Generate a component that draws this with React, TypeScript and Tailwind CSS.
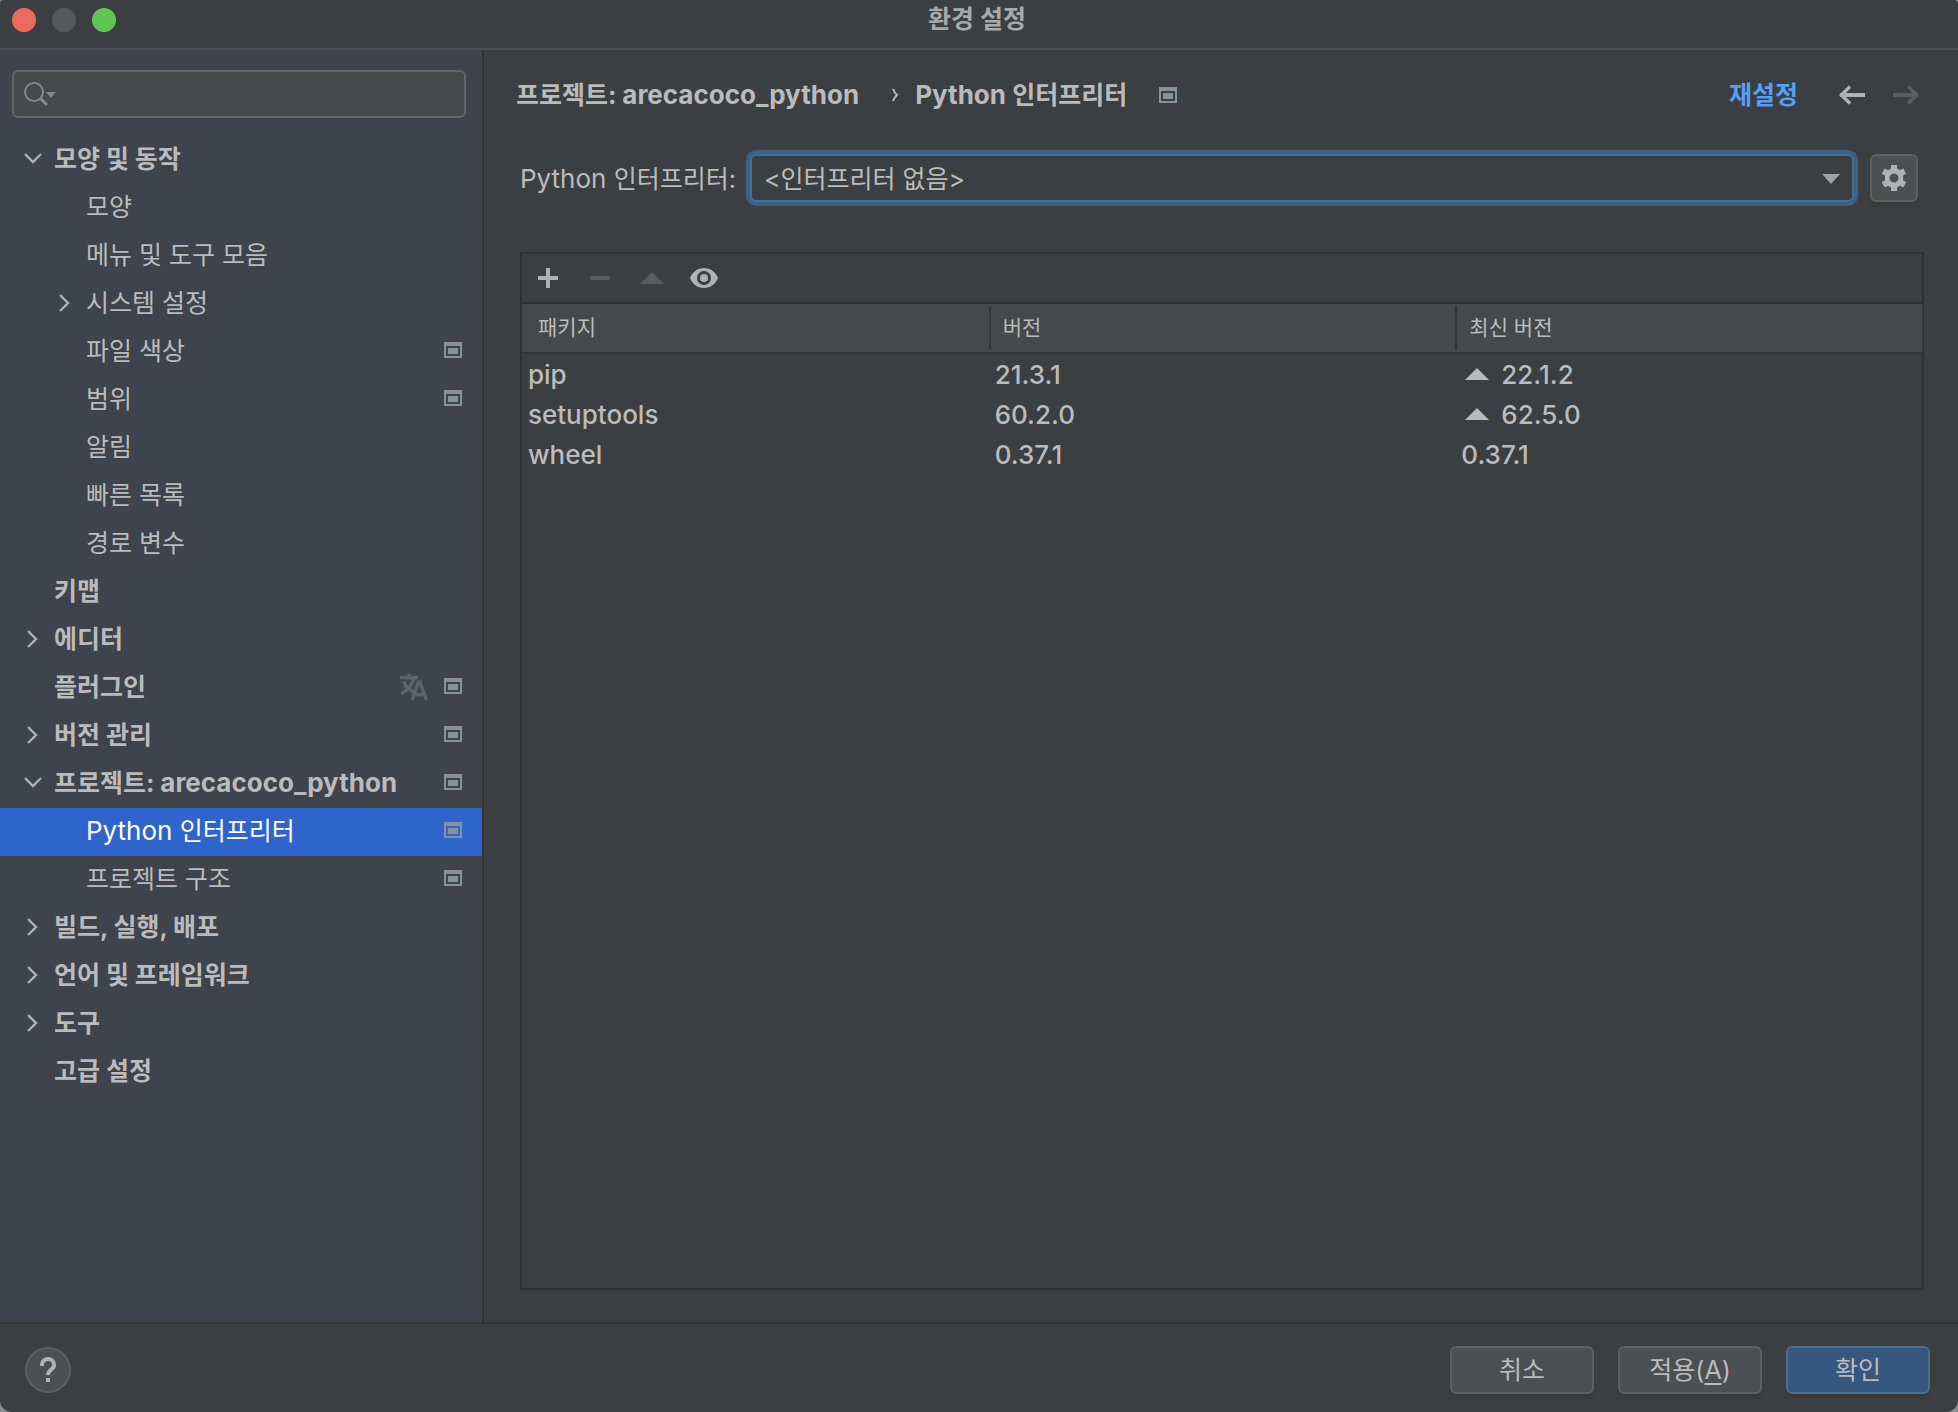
import { useState } from "react";

interface TreeItem {
  label: string;
  level: 0 | 1;
  state?: "open" | "closed";
  project?: boolean;
  translate?: boolean;
}

const treeItems: TreeItem[] = [
  { label: "모양 및 동작", level: 0, state: "open" },
  { label: "모양", level: 1 },
  { label: "메뉴 및 도구 모음", level: 1 },
  { label: "시스템 설정", level: 1, state: "closed" },
  { label: "파일 색상", level: 1, project: true },
  { label: "범위", level: 1, project: true },
  { label: "알림", level: 1 },
  { label: "빠른 목록", level: 1 },
  { label: "경로 변수", level: 1 },
  { label: "키맵", level: 0 },
  { label: "에디터", level: 0, state: "closed" },
  { label: "플러그인", level: 0, project: true, translate: true },
  { label: "버전 관리", level: 0, state: "closed", project: true },
  { label: "프로젝트: arecacoco_python", level: 0, state: "open", project: true },
  { label: "Python 인터프리터", level: 1, project: true },
  { label: "프로젝트 구조", level: 1, project: true },
  { label: "빌드, 실행, 배포", level: 0, state: "closed" },
  { label: "언어 및 프레임워크", level: 0, state: "closed" },
  { label: "도구", level: 0, state: "closed" },
  { label: "고급 설정", level: 0 },
];

const packages = [
  { name: "pip", version: "21.3.1", latest: "22.1.2", upgradable: true },
  { name: "setuptools", version: "60.2.0", latest: "62.5.0", upgradable: true },
  { name: "wheel", version: "0.37.1", latest: "0.37.1", upgradable: false },
];

// Latin runs are set one pixel larger than the Hangul around them
function Mixed({ text }: { text: string }) {
  return text.split(/([A-Za-z_]+ ?)/).map((part, i) =>
    i % 2 === 1 ? (
      <span key={i} className="text-[26px] leading-none">
        {part}
      </span>
    ) : (
      part
    ),
  );
}

function ProjectIcon() {
  return (
    <svg width="18" height="16" viewBox="0 0 18 16" className="shrink-0 text-[#87939a]">
      <path
        fill="currentColor"
        fillRule="evenodd"
        d="M0 0h18v16H0zM2 4v10h14V4zM4 6h10v6H4z"
      />
    </svg>
  );
}

function TranslateIcon() {
  return (
    <svg
      width="28"
      height="28"
      viewBox="0 0 28 28"
      fill="none"
      stroke="currentColor"
      strokeWidth="3.4"
      className="shrink-0 text-[#5b656d]"
    >
      <path d="M0 5.500h18M9 2v4M3.500 9.500C6 15 10 18 13.500 20M14 6c-1.500 7-6 12-13 15.500" />
      <path d="M12 28l6.500-18h1.500l6.500 18M14.500 22.500h9.500" />
    </svg>
  );
}

function Chevron({ state }: { state?: "open" | "closed" }) {
  return (
    <svg
      width="20"
      height="20"
      viewBox="0 0 20 20"
      fill="none"
      stroke="currentColor"
      strokeWidth="2.4"
      className="shrink-0 text-[#b0b2b4]"
    >
      {state === "open" && <path d="M2 5l8 8 8-8" />}
      {state === "closed" && <path d="M5 2l8 8-8 8" />}
    </svg>
  );
}

function Triangle({ className }: { className: string }) {
  return (
    <svg width="24" height="12" viewBox="0 0 24 12" className={className}>
      <path fill="currentColor" d="M0 12L12 0l12 12z" />
    </svg>
  );
}

function TitleBar() {
  return (
    <header className="relative flex h-[50px] shrink-0 items-start justify-center border-b-2 border-[#515151] pr-1">
      <div className="absolute top-2 left-3 flex gap-4">
        <button type="button" aria-label="닫기" className="size-6 rounded-full bg-[#ed6a5e]" />
        <button type="button" aria-label="최소화" className="size-6 rounded-full bg-[#565a5c]" />
        <button type="button" aria-label="확대" className="size-6 rounded-full bg-[#61c554]" />
      </div>
      <h1 className="leading-[38px] font-bold text-[#a7a9aa]">환경 설정</h1>
    </header>
  );
}

function Sidebar() {
  const [selected, setSelected] = useState("Python 인터프리터");

  return (
    <aside className="w-[484px] shrink-0 border-r-2 border-[#323232] bg-[#3f434c]">
      {/* Search */}
      <div className="relative mx-3 mt-5 mr-4 mb-[18px]">
        <input
          type="text"
          aria-label="검색"
          className="block h-12 w-full rounded-md border-2 border-[#646464] bg-[#45494a] pr-3 pl-12 outline-none"
        />
        <svg
          width="34"
          height="26"
          viewBox="0 0 34 26"
          fill="none"
          className="pointer-events-none absolute top-[11px] left-3 text-[#7e8b94]"
        >
          <circle cx="10" cy="11" r="9" stroke="currentColor" strokeWidth="2" />
          <path d="M16 17l7 7" stroke="currentColor" strokeWidth="3" />
          <path d="M22 11h10l-5 6z" fill="currentColor" />
        </svg>
      </div>

      {/* Settings tree */}
      <nav>
        {treeItems.map((item) => {
          const active = item.label === selected;
          return (
            <button
              type="button"
              key={item.label}
              onClick={() => setSelected(item.label)}
              className={`flex h-12 w-full items-center pr-5 pb-0.5 text-left ${
                item.level === 0 ? "pl-[23px] font-bold" : "pl-[55px]"
              } ${active ? "bg-[#2f65ca] text-white" : ""}`}
            >
              <Chevron state={item.state} />
              <span className="ml-[11px] flex-1 whitespace-nowrap">
                <Mixed text={item.label} />
              </span>
              <span className="flex items-center gap-4 pb-0.5">
                {item.translate && <TranslateIcon />}
                {item.project && <ProjectIcon />}
              </span>
            </button>
          );
        })}
      </nav>
    </aside>
  );
}

function Breadcrumb() {
  return (
    <div className="-mr-0.5 flex h-12 items-center pt-0.5 font-bold">
      <span>
        <Mixed text="프로젝트: arecacoco_python" />
      </span>
      <svg width="8" height="16" viewBox="0 0 8 16" fill="none" className="mr-4 ml-8">
        <path d="M2 2c1 3 2 4 4 6-2 2-3 3-4 6" stroke="currentColor" strokeWidth="2" />
      </svg>
      <span className="mr-8">
        <Mixed text="Python 인터프리터" />
      </span>
      <ProjectIcon />
      <a href="#reset" className="ml-auto text-[#589df6]">
        재설정
      </a>
      <button type="button" aria-label="뒤로" className="ml-10 text-[#afb1b3]">
        <svg width="28" height="20" viewBox="0 0 28 20" fill="none" stroke="currentColor">
          <path d="M2 10h25" strokeWidth="4" />
          <path d="M12 1.500L3.500 10l8.500 8.500" strokeWidth="3.500" />
        </svg>
      </button>
      <button type="button" aria-label="앞으로" disabled className="ml-[26px] text-[#5c5d5e]">
        <svg width="28" height="20" viewBox="0 0 28 20" fill="none" stroke="currentColor">
          <path d="M1 10h25" strokeWidth="4" />
          <path d="M16 1.500l8.500 8.500-8.500 8.500" strokeWidth="3.500" />
        </svg>
      </button>
    </div>
  );
}

function InterpreterRow() {
  return (
    <div className="mt-8 flex h-14 items-center pl-1">
      <label htmlFor="interpreter" className="mr-2.5 pt-0.5 whitespace-nowrap">
        <Mixed text="Python 인터프리터:" />
      </label>
      <div className="relative flex-1 rounded-[10px] bg-[#3d6185] p-1">
        <select
          id="interpreter"
          className="block h-12 w-full appearance-none rounded-md border-2 border-[#466d94] bg-[#3c3f41] pt-0.5 pr-12 pl-3 outline-none"
        >
          <option>&lt;인터프리터 없음&gt;</option>
        </select>
        <svg
          width="18"
          height="10"
          viewBox="0 0 18 10"
          className="pointer-events-none absolute top-6 right-[18px] text-[#9fa2a4]"
        >
          <path fill="currentColor" d="M0 0h18l-9 10z" />
        </svg>
      </div>
      <button
        type="button"
        aria-label="인터프리터 설정"
        className="ml-3 flex size-12 items-center justify-center rounded-md border-2 border-[#5e6060] bg-[#4c5052] text-[#afb1b3] shadow-[0_3px_2px_#36393a]"
      >
        <svg width="26" height="26" viewBox="0 0 26 26">
          <path
            fill="currentColor"
            fillRule="evenodd"
            d="M10 0h6v3.600l3 1.700 3.200-1.800 3 5.200-3.100 1.900v4.800l3.100 1.900-3 5.200-3.200-1.800-3 1.700V26h-6v-3.600l-3-1.700-3.200 1.800-3-5.200 3.100-1.900v-4.800L.8 8.700l3-5.200L7 5.300l3-1.700zM13 8.500a4.500 4.500 0 1 0 0 9 4.500 4.500 0 0 0 0-9z"
          />
        </svg>
      </button>
    </div>
  );
}

function PackageTable() {
  return (
    <section className="mt-[46px] -mr-1.5 ml-1 flex-1 border-2 border-[#323232]">
      {/* Toolbar */}
      <div className="flex h-[50px] items-center gap-6 border-b-2 border-[#323232] px-3 text-[#afb1b3]">
        <button type="button" aria-label="추가">
          <svg width="28" height="28" viewBox="0 0 28 28">
            <path fill="currentColor" d="M12 4h4v8h8v4h-8v8h-4v-8H4v-4h8z" />
          </svg>
        </button>
        <button type="button" aria-label="제거" disabled className="text-[#5c5d5e]">
          <svg width="28" height="28" viewBox="0 0 28 28">
            <path fill="currentColor" d="M4 12h20v4H4z" />
          </svg>
        </button>
        <button type="button" aria-label="업그레이드" disabled className="px-0.5 text-[#5c5d5e]">
          <Triangle className="block" />
        </button>
        <button type="button" aria-label="초기 릴리스 표시">
          <svg width="28" height="28" viewBox="0 0 28 28">
            <path
              fill="currentColor"
              fillRule="evenodd"
              d="M14 4C7.600 4 2.200 8 0 14c2.200 6 7.600 10 14 10s11.800-4 14-10C25.800 8 20.400 4 14 4zm0 3a7 7 0 1 1 0 14 7 7 0 0 1 0-14z"
            />
            <circle cx="14" cy="14" r="4" fill="currentColor" />
          </svg>
        </button>
      </div>

      <table className="w-full table-fixed border-separate border-spacing-0 text-left">
        <thead>
          <tr className="h-[50px] bg-[#45494b] text-[21px]">
            <th className="border-b-2 border-[#323638] p-0 pl-4 font-normal">패키지</th>
            <th className="border-b-2 border-[#323638] p-0 font-normal">
              <div className="flex h-11 items-center border-l-2 border-[#323638] pl-3">버전</div>
            </th>
            <th className="border-b-2 border-[#323638] p-0 font-normal">
              <div className="flex h-11 items-center border-l-2 border-[#323638] pl-3">
                최신 버전
              </div>
            </th>
          </tr>
        </thead>
        <tbody>
          {packages.map((pkg) => (
            <tr key={pkg.name} className="h-10 text-[26px] leading-[38px] font-medium">
              <td className="p-0 pt-0.5 pl-1.5">{pkg.name}</td>
              <td className="p-0 pt-0.5 pl-1.5">{pkg.version}</td>
              <td className="p-0 pt-0.5 pl-1.5">
                <span className="flex items-center">
                  {pkg.upgradable && <Triangle className="mr-3 mb-0.5 ml-1" />}
                  {pkg.latest}
                </span>
              </td>
            </tr>
          ))}
        </tbody>
      </table>
    </section>
  );
}

function Footer() {
  const base =
    "h-12 w-36 rounded-md border-2 leading-none shadow-[0_3px_2px_#36393a]";
  return (
    <footer className="flex h-[90px] shrink-0 items-center gap-6 border-t-2 border-[#323232] pt-1 pr-7 pl-[25px]">
      <button
        type="button"
        aria-label="도움말"
        className="mr-auto flex size-[46px] items-center justify-center rounded-full border-2 border-[#5e6060] bg-[#4c5052] text-[#afb1b3]"
      >
        <svg width="18" height="26" viewBox="0 0 18 26" fill="none">
          <path
            d="M3 9V8a6 6 0 0 1 12 0c0 5-6 4.500-6 10"
            stroke="currentColor"
            strokeWidth="4"
          />
          <path d="M7 21h4v4H7z" fill="currentColor" />
        </svg>
      </button>
      <button type="button" className={`${base} border-[#5e6060] bg-[#4c5052]`}>
        취소
      </button>
      <button type="button" className={`${base} border-[#5e6060] bg-[#4c5052]`}>
        적용(<span className="underline decoration-2 underline-offset-4">A</span>)
      </button>
      <button type="button" className={`${base} border-[#4c708c] bg-[#365880]`}>
        확인
      </button>
    </footer>
  );
}

export default function App() {
  return (
    <div className="min-h-screen bg-[#8a8c8d]">
      <div className="flex min-h-screen flex-col overflow-hidden rounded-t-sm rounded-b-xl bg-[#3c3f41] font-[Inter,'Noto_Sans_CJK_KR',sans-serif] text-[25px] leading-8 text-[#bbbbbb]">
        <TitleBar />
        <div className="flex flex-1">
          <Sidebar />
          <main className="flex min-w-0 flex-1 flex-col pt-5 pr-10 pb-8 pl-8">
            <Breadcrumb />
            <InterpreterRow />
            <PackageTable />
          </main>
        </div>
        <Footer />
      </div>
    </div>
  );
}
